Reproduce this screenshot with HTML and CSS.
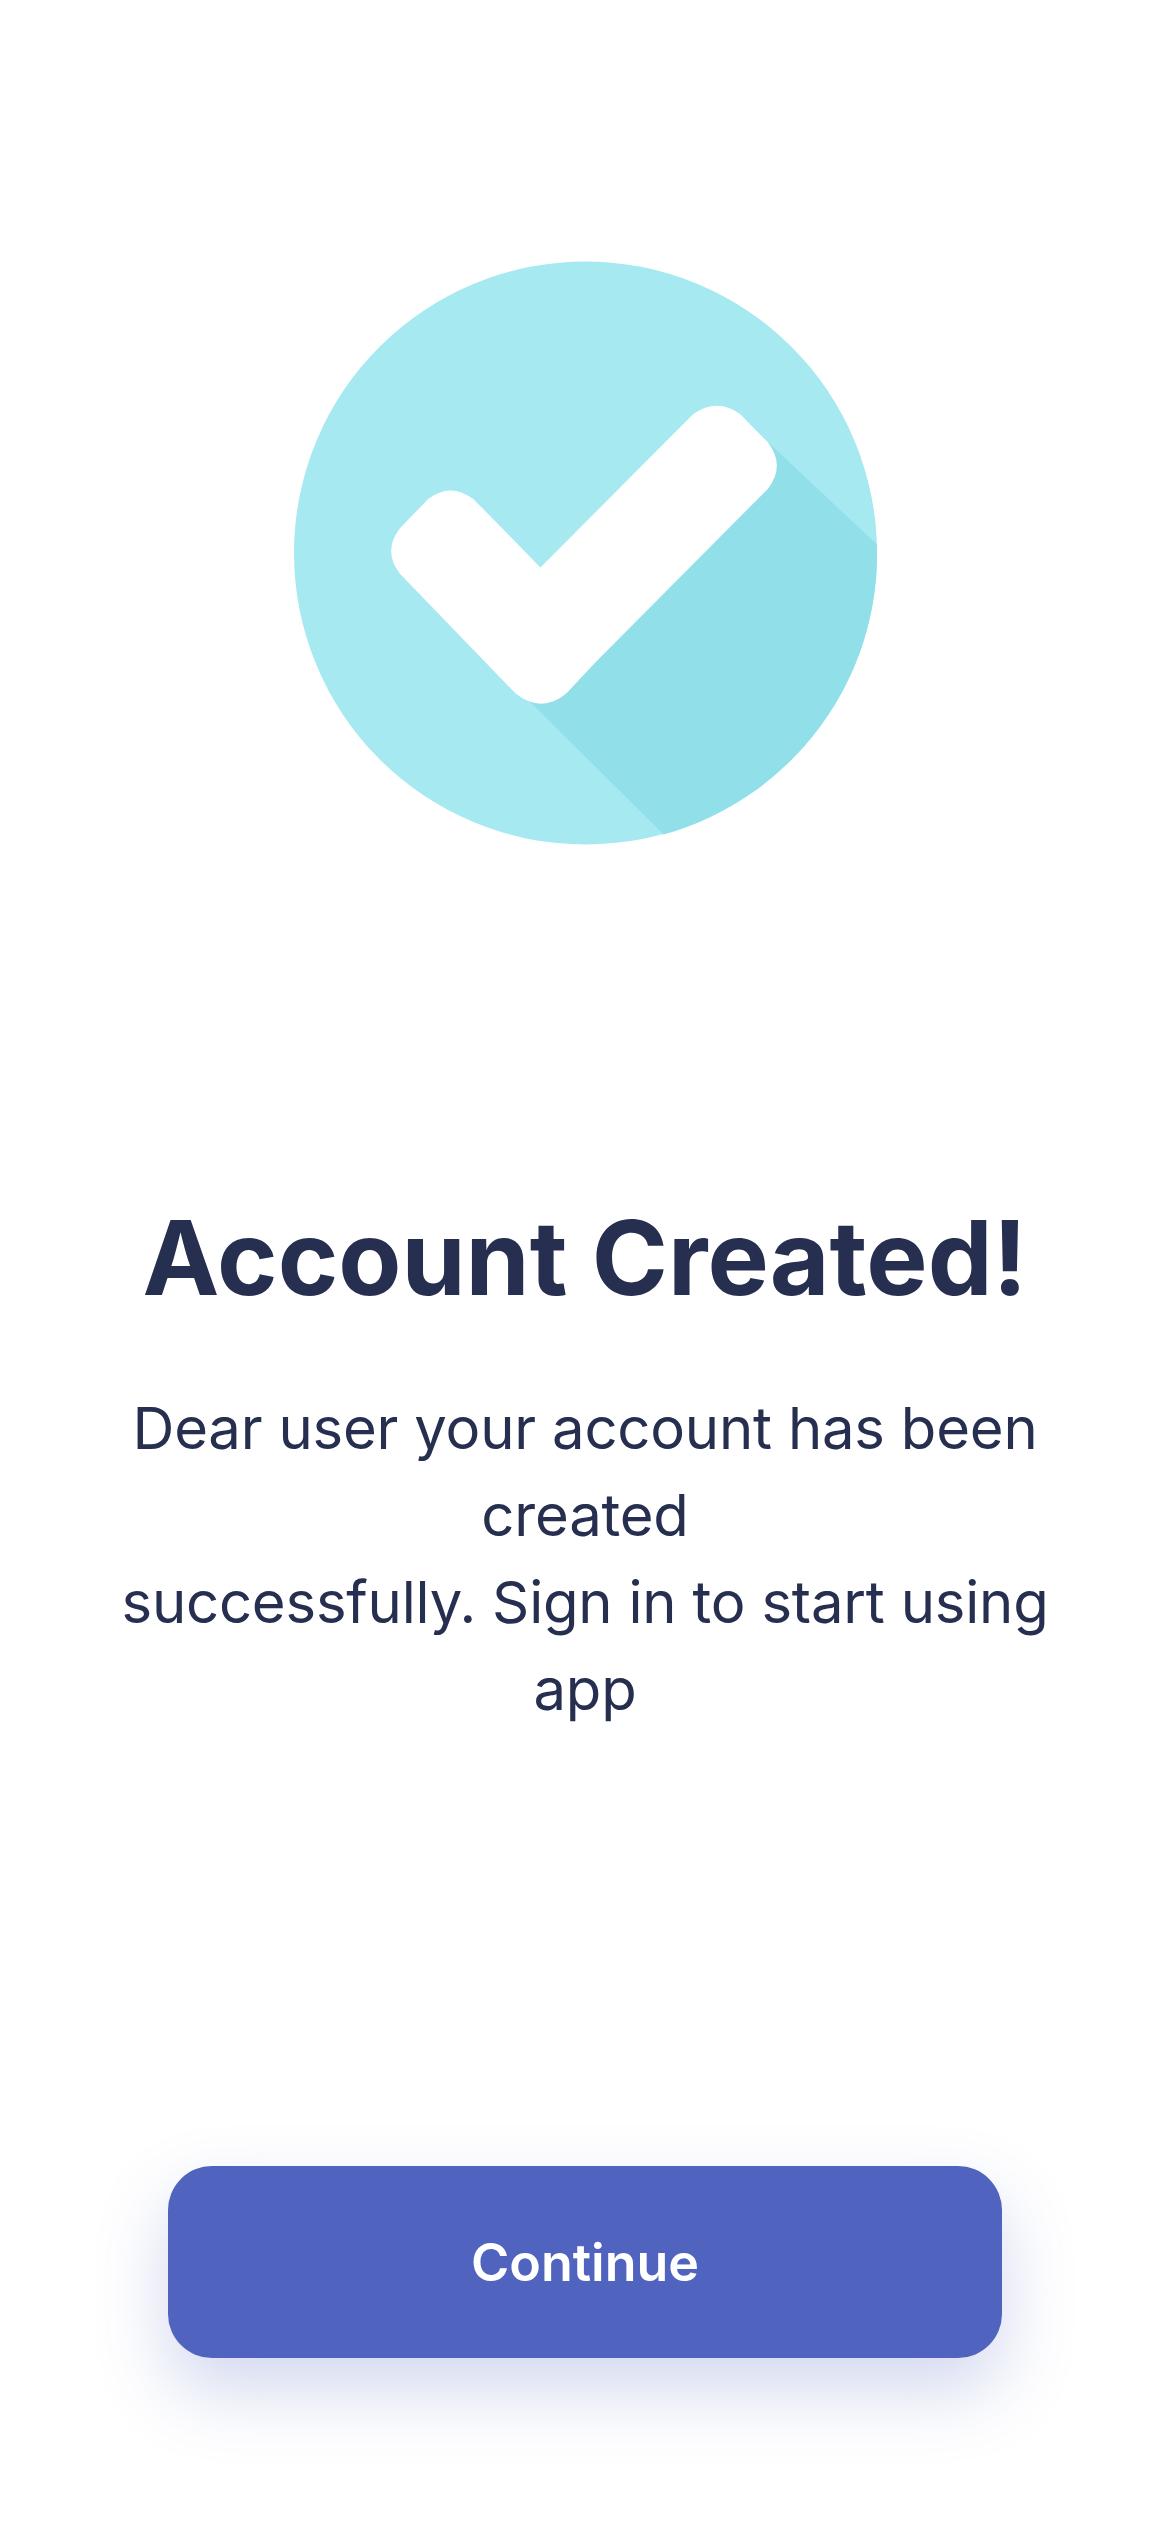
FILE: index.html
```html
<!DOCTYPE html>
<html lang="en">
<head>
  <meta charset="UTF-8" />
  <meta name="viewport" content="width=device-width, initial-scale=1.0" />
  <title>Account Created</title>
  <link rel="stylesheet" href="styles.css">
</head>
<body>
  <div class="container">
    <svg class="check-badge" viewBox="0 0 582 584" aria-hidden="true">
      <circle cx="291" cy="292" r="291" fill="#a7e9f1" />
      <path d="M474 182 L582 283.5 A291 291 0 0 1 369 573 L235 440 Z" fill="#91e0e9" />
      <path d="M246 306.4 L399 153 Q422 137 445 153 L473 181.5 Q491 205 473 228 L302 400 L272 432 Q247 453 221 432 L106 313 Q88 290 106 267 L134 238 Q156 221 179 238 Z" fill="#ffffff" />
    </svg>

    <h1>Account Created!</h1>
    <p class="message">Dear user your account has been created<br>successfully. Sign in to start using app</p>

    <button class="continue" type="button">Continue</button>
  </div>
</body>
</html>
```

FILE: styles.css
```css
body {
  font-family: Inter, "Liberation Sans", sans-serif;
  background-color: #ffffff;
  margin: 0;
  color: #272f50;
}

.container {
  display: flex;
  flex-direction: column;
  align-items: center;
  height: 2532px;
  padding-top: 260px;
  box-sizing: border-box;
}

.check-badge {
  display: block;
  width: 583px;
  height: 586px;
}

h1 {
  margin: 352px 0 0;
  font-size: 103px;
  line-height: 120px;
  font-weight: 700;
  text-align: center;
}

.message {
  width: 940px;
  margin: 67px 0 0;
  font-size: 58px;
  line-height: 87px;
  font-weight: 400;
  letter-spacing: -0.2px;
  text-align: center;
}

.continue {
  width: 834px;
  height: 192px;
  margin-top: 433px;
  border: none;
  border-radius: 44px;
  background-color: #4f63bf;
  color: #ffffff;
  font-family: inherit;
  font-size: 52px;
  font-weight: 600;
  box-shadow: 0 32px 70px rgba(79, 99, 191, 0.25);
  cursor: pointer;
}
```
